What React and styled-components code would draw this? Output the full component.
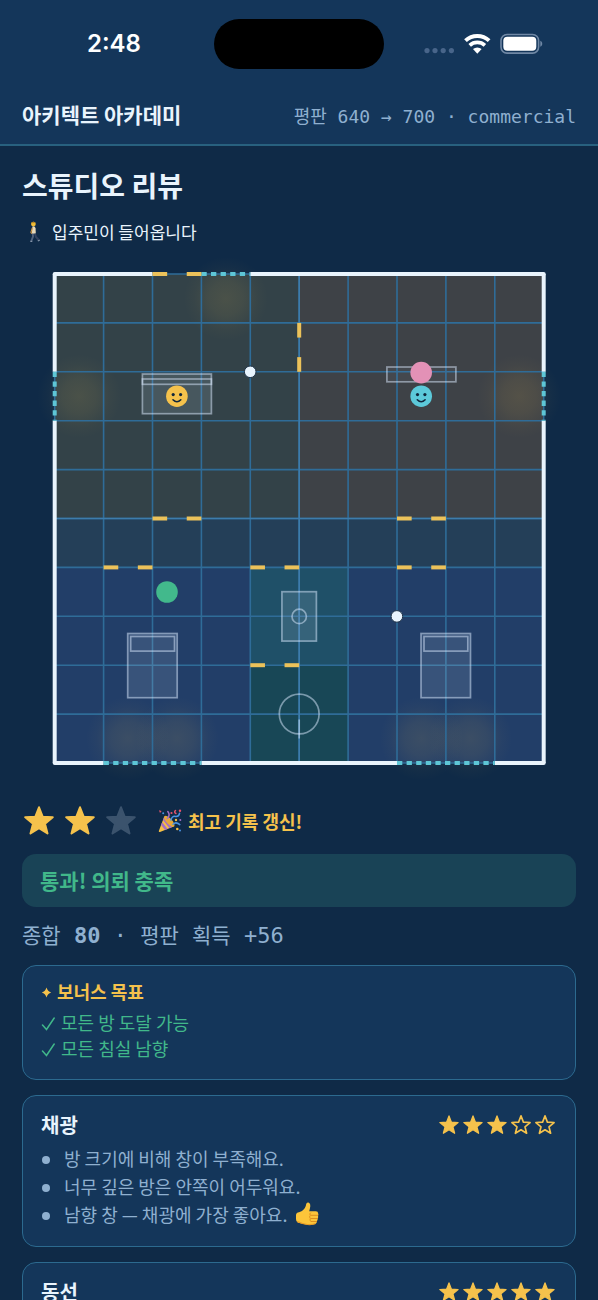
import styled, { createGlobalStyle } from 'styled-components';

const colors = {
  page: '#0f2a47',
  panel: '#14365a',
  line: '#2c6a8f',
  ink: '#e9f4fd',
  muted: '#8fb0d0',
  gold: '#f5c24c',
  green: '#41b88a',
  cyan: '#5ec6d6',
};

const sans = "Inter, 'Noto Sans CJK KR', sans-serif";
const mono = "'DejaVu Sans Mono', 'Noto Sans CJK KR', monospace";

const GlobalStyle = createGlobalStyle`
  * {
    box-sizing: border-box;
  }
  body {
    margin: 0;
    background: ${colors.page};
    color: ${colors.ink};
    font-family: 'Noto Sans CJK KR', sans-serif;
  }
  h1, h2, p, ul {
    margin: 0;
    padding: 0;
  }
`;

const Screen = styled.div`
  display: flex;
  flex-direction: column;
  height: 100vh;
`;

const Header = styled.header`
  flex: none;
  background: ${colors.panel};
  border-bottom: 2px solid #28617f;
`;

const StatusBar = styled.div`
  display: grid;
  grid-template-columns: 1fr 170px 1fr;
  align-items: center;
  justify-items: center;
  height: 88px;
  padding: 0 14px;
`;

const Time = styled.time`
  font-family: ${sans};
  font-weight: 600;
  font-size: 24px;
  line-height: 28px;
  color: #fff;
`;

const Island = styled.div`
  width: 100%;
  height: 50px;
  border-radius: 25px;
  background: #000;
`;

const TitleBar = styled.div`
  display: flex;
  align-items: baseline;
  justify-content: space-between;
  height: 56px;
  padding: 12px 22px 0;
`;

const AppName = styled.p`
  font-weight: 700;
  font-size: 21px;
  line-height: 28px;
`;

const Reputation = styled.p`
  font-family: ${mono};
  font-size: 18px;
  line-height: 28px;
  color: ${colors.muted};
`;

const Main = styled.main`
  flex: 1;
  min-height: 0;
  overflow-y: auto;
  scrollbar-width: none;
  padding: 19px 22px;
`;

const Stack = styled.div`
  display: grid;
  gap: 15px;
`;

const Heading = styled.h1`
  font-weight: 700;
  font-size: 28px;
  line-height: 40px;
`;

const Notice = styled.p`
  display: flex;
  align-items: center;
  gap: 6px;
  font-size: 17px;
  line-height: 23px;
`;

const Plan = styled.svg`
  display: block;
  width: 100%;
  height: auto;
`;

const ResultRow = styled.div`
  display: flex;
  align-items: center;
  gap: 22px;
  height: 36px;
  padding-left: 2px;
`;

const Stars = styled.div`
  display: flex;
  gap: ${props => props.$gap || '0'};
`;

const Record = styled.p`
  display: flex;
  align-items: center;
  gap: 6px;
  font-weight: 700;
  font-size: 18px;
  line-height: 24px;
  color: ${colors.gold};
`;

const Banner = styled.p`
  padding: 12px 18px 13px;
  border-radius: 14px;
  background: #194356;
  font-weight: 700;
  font-size: 21px;
  line-height: 28px;
  color: ${colors.green};
`;

const Score = styled.p`
  font-family: ${mono};
  font-size: 22px;
  line-height: 28px;
  color: ${colors.muted};
`;

const Word = styled.span`
  font-size: 21px;
`;

const Card = styled.section`
  padding: 15px 18px 18px;
  border: 1px solid ${colors.line};
  border-radius: 14px;
  background: ${colors.panel};
`;

const BonusTitle = styled.h2`
  display: flex;
  align-items: center;
  gap: 5px;
  margin-bottom: 8px;
  font-weight: 700;
  font-size: 18px;
  line-height: 20px;
  color: ${colors.gold};
`;

const Goals = styled.ul`
  list-style: none;
`;

const Goal = styled.li`
  display: flex;
  align-items: center;
  gap: 6px;
  font-size: 18px;
  line-height: 26px;
  color: ${colors.green};
`;

const CardHead = styled.div`
  display: flex;
  align-items: center;
  justify-content: space-between;
  margin-bottom: 5px;
`;

const CardTitle = styled.h2`
  font-weight: 700;
  font-size: 20px;
  line-height: 28px;
`;

const Notes = styled.ul`
  list-style: none;
`;

const Note = styled.li`
  display: flex;
  align-items: center;
  padding-left: 1px;
  font-size: 18px;
  line-height: 28px;
  color: ${colors.muted};

  &::before {
    content: '';
    width: 8px;
    height: 8px;
    margin: 4px 14px 0 0;
    border-radius: 50%;
    background: ${colors.muted};
  }

  & > svg {
    margin-left: 8px;
  }
`;

const StatusIcons = () => (
  <svg width="120" height="24" viewBox="0 0 120 24" aria-hidden="true">
    <g fill="#48658a">
      <circle cx="3" cy="18.6" r="2.6" />
      <circle cx="11" cy="18.6" r="2.6" />
      <circle cx="19.2" cy="18.6" r="2.6" />
      <circle cx="27.4" cy="18.6" r="2.6" />
    </g>
    <g fill="none" stroke="#fff">
      <path d="M41.500 8.600a17.400 17.400 0 0 1 23.600 0" strokeWidth="4" />
      <path d="M45.700 13.300a11.200 11.200 0 0 1 15.200 0" strokeWidth="3.700" />
    </g>
    <path d="M53.300 21.800l-4.300-4.700a6.400 6.400 0 0 1 8.600 0z" fill="#fff" />
    <rect x="77" y="2.500" width="37.600" height="18.600" rx="6" fill="none" stroke="#7088a5" strokeWidth="1.600" />
    <rect x="79.300" y="4.800" width="33" height="14" rx="4" fill="#fff" />
    <path d="M116.300 8.800v6c2.600-.8 2.600-5.200 0-6z" fill="#7088a5" />
  </svg>
);

const STAR_PATH =
  'M12 1L14.900 8.500 23 9 16.800 14.200 18.800 22 12 17.700 5.200 22 7.200 14.200 1 9 9.100 8.500z';

const Star = ({ fill = colors.gold }) => (
  <svg width="30" height="30" viewBox="0 0 24 24" aria-hidden="true">
    <path d={STAR_PATH} fill={fill} stroke={fill} strokeWidth="1.600" strokeLinejoin="round" />
  </svg>
);

const RatingStar = ({ outline }) => (
  <svg width="24" height="24" viewBox="-2.500 -2.500 29 29" aria-hidden="true">
    <path
      d={STAR_PATH}
      fill={outline ? 'none' : colors.gold}
      stroke={colors.gold}
      strokeWidth={outline ? 2 : 1.5}
      strokeLinejoin="round"
    />
  </svg>
);

const Rating = ({ value }) => (
  <Stars role="img" aria-label={`${value} / 5`}>
    {[1, 2, 3, 4, 5].map(n => (
      <RatingStar key={n} outline={n > value} />
    ))}
  </Stars>
);

const Walker = () => (
  <svg width="24" height="22" viewBox="0 0 24 22" aria-hidden="true">
    <path d="M10.400 5.500q2.600-.8 3.200 2l.2 5.200-4 .3z" fill="#e9d9b8" />
    <path d="M10.300 7l-1.400 4.300 1 1.500" fill="none" stroke="#d79b45" strokeWidth="1.100" />
    <path d="M10.800 12.500l.2 3.200-1.700 4.300" fill="none" stroke="#51627e" strokeWidth="1.900" />
    <path d="M12.800 12.500l1.200 3.400 2.600 3" fill="none" stroke="#33425f" strokeWidth="2" />
    <path d="M8.300 20.300h2M15.800 20l2-1" stroke="#8494a8" strokeWidth="1.200" />
    <circle cx="11.400" cy="3.100" r="2.400" fill="#f3bd35" />
    <path d="M9.300 2.300q2-2.800 4.300-.2z" fill="#b98724" />
  </svg>
);

const Party = () => (
  <svg width="24" height="24" viewBox="0 0 24 24" aria-hidden="true">
    <path d="M6.400 7.300L.8 22q-.2 1.400 1.200 1l14.300-5.800z" fill="#f6bf45" />
    <path d="M5 11l6.500 8.200 2.600-1.100L6 8.300zM3.100 16l4 5 2.500-1-5.400-6.700z" fill="#a56fc4" />
    <ellipse cx="11.300" cy="12.200" rx="2.800" ry="7" transform="rotate(-44 11.300 12.200)" fill="#e8a838" />
    <g fill="none" strokeWidth="1.500" strokeLinecap="round">
      <path d="M9.200 9.500q3.600-3.200.6-7" stroke="#a56fc4" />
      <path d="M13 11.200q.8-4.500 4.600-3.800 3.600.4 4-3.200" stroke="#4a93e2" />
      <path d="M15 15.200q3-2.800 6.800.4" stroke="#4a93e2" />
      <path d="M17.500 1.500q-1.800 1.700.4 3" stroke="#e5526c" />
    </g>
    <path d="M1 1.200l2.600.8L2 4z" fill="#e5526c" />
    <circle cx="5.200" cy="4.300" r="1" fill="#4a93e2" />
    <circle cx="13.500" cy="4" r="1.100" fill="#e5526c" />
    <circle cx="22" cy="1.800" r="1.200" fill="#e5526c" />
    <circle cx="18" cy="11" r="1.200" fill="#f6bf45" />
    <circle cx="22.300" cy="11" r="1" fill="#a56fc4" />
    <circle cx="19.300" cy="20" r="1.300" fill="#f6bf45" />
    <circle cx="22" cy="21.600" r="1" fill="#4a93e2" />
  </svg>
);

const ThumbUp = () => (
  <svg width="24" height="24" viewBox="0 0 24 24" aria-hidden="true">
    <path
      d="M1 13.200q0-2.600 3-3l3-1.200q3.600-2.600 4.300-7.300Q12 .2 13.400.4q2.800 1 1.500 6l-.7 2.800h6.600q2.400.2 2.300 2 .7 1.400-.1 2.600.6 1.500-.4 2.700.4 1.600-.7 2.600.2 2.500-2.500 3.100-6.400 1.600-11.700-.4L3 20.700Q.9 20 1 17z"
      fill="#fcc53a"
    />
    <path
      d="M22.800 13.300h-6.600M22.500 16.500h-6.300M21.600 19.500h-5.400M15.600 10.800q-1.500 1-.3 2.500-1.400 1.600 0 3.200-1 1.700.6 3"
      fill="none"
      stroke="#d98a1c"
      strokeWidth=".9"
      strokeLinecap="round"
    />
    <path d="M2.200 19.500q5.600 2.600 10.200 3 5.300.4 8.300-1" fill="none" stroke="#e79b25" strokeWidth="1.200" />
  </svg>
);

const Sparkle = () => (
  <svg width="11" height="14" viewBox="0 0 11 14" aria-hidden="true">
    <path
      d="M5.500 3.500Q6.600 7.400 10.200 8.500 6.600 9.600 5.500 13.500 4.400 9.600 .8 8.500 4.400 7.400 5.500 3.500z"
      fill={colors.gold}
    />
  </svg>
);

const Check = () => (
  <svg width="14" height="20" viewBox="0 0 14 20" aria-hidden="true">
    <path d="M1.500 13l4 4.500L13.200 6" fill="none" stroke={colors.green} strokeWidth="1.500" strokeLinecap="round" />
  </svg>
);

// plan geometry: 10 x 10 cells, origin in the top left corner
const CELL = 48.9;
const SIDE = CELL * 10;

const rooms = [
  { x: 0, y: 0, w: 5, h: 5, fill: '#334248' },
  { x: 5, y: 0, w: 5, h: 5, fill: '#3e4247' },
  { x: 0, y: 5, w: 10, h: 1, fill: '#243f58' },
  { x: 0, y: 6, w: 4, h: 4, fill: '#223e68' },
  { x: 4, y: 6, w: 2, h: 2, fill: '#1f5068' },
  { x: 4, y: 8, w: 2, h: 2, fill: '#184756' },
  { x: 6, y: 6, w: 4, h: 4, fill: '#223e68' },
];

const glows = [
  [3.5, 0.5],
  [0.5, 2.5],
  [9.5, 2.5],
  [1.5, 9.5],
  [2.5, 9.5],
  [7.5, 9.5],
  [8.5, 9.5],
];

const doors = [
  { x: 2, y: 0 },
  { x: 5, y: 1, vertical: true },
  { x: 2, y: 5 },
  { x: 7, y: 5 },
  { x: 1, y: 6 },
  { x: 4, y: 6 },
  { x: 7, y: 6 },
  { x: 4, y: 8 },
];

const windows = [
  [3, 0, 4, 0],
  [0, 2, 0, 3],
  [10, 2, 10, 3],
  [1, 10, 3, 10],
  [7, 10, 9, 10],
];

const walls = [
  [0, 0, 2, 0],
  [4, 0, 10, 0],
  [0, 0, 0, 2],
  [0, 3, 0, 10],
  [10, 0, 10, 2],
  [10, 3, 10, 10],
  [0, 10, 1, 10],
  [3, 10, 7, 10],
  [9, 10, 10, 10],
];

const Segment = ({ at, ...rest }) => (
  <line x1={at[0] * CELL} y1={at[1] * CELL} x2={at[2] * CELL} y2={at[3] * CELL} {...rest} />
);

const Door = ({ x, y, vertical }) => {
  const ends = [0, 0.7];
  return ends.map(start => {
    const from = vertical ? [x, y + start] : [x + start, y];
    const to = vertical ? [x, y + start + 0.3] : [x + start + 0.3, y];
    return <Segment key={start} at={[...from, ...to]} stroke="#ecc25a" strokeWidth="4" />;
  });
};

const Bed = ({ x, y }) => (
  <g>
    <rect x={x} y={y} width="49.500" height="64.200" />
    <rect x={x + 3} y={y + 3} width="43.800" height="14.600" fill="none" />
  </g>
);

const Resident = ({ x, y, fill, face }) => (
  <g>
    <circle cx={x} cy={y} r="10.800" fill={fill} />
    {face && (
      <g>
        <circle cx={x - 3.7} cy={y - 1.6} r="1.600" fill="#10263c" />
        <circle cx={x + 3.7} cy={y - 1.6} r="1.600" fill="#10263c" />
        <path
          d={`M${x - 3.9} ${y + 3.6}q3.900 4 7.800 0`}
          fill="none"
          stroke="#10263c"
          strokeWidth="1.600"
          strokeLinecap="round"
        />
      </g>
    )}
  </g>
);

const FloorPlan = () => (
  <Plan viewBox="-32.700 -16 554 530" role="img" aria-label="평면도">
    <defs>
      <radialGradient id="glow">
        <stop offset="0" stopColor="#f5c24c" stopOpacity=".12" />
        <stop offset=".4" stopColor="#f5c24c" stopOpacity=".085" />
        <stop offset=".75" stopColor="#f5c24c" stopOpacity=".025" />
        <stop offset="1" stopColor="#f5c24c" stopOpacity="0" />
      </radialGradient>
    </defs>
    {rooms.map(r => (
      <rect key={`${r.x}-${r.y}`} x={r.x * CELL} y={r.y * CELL} width={r.w * CELL} height={r.h * CELL} fill={r.fill} />
    ))}
    {glows.map(([x, y]) => (
      <circle key={`${x}-${y}`} cx={x * CELL} cy={y * CELL} r="42" fill="url(#glow)" />
    ))}
    <g stroke="#2f6c98" strokeWidth="1.600">
      {[0, 1, 2, 3, 4, 5, 6, 7, 8, 9, 10].map(n => (
        <g key={n}>
          <line x1={n * CELL} y1="0" x2={n * CELL} y2={SIDE} />
          <line x1="0" y1={n * CELL} x2={SIDE} y2={n * CELL} />
        </g>
      ))}
    </g>
    <g stroke="#3d7cac" strokeWidth="1.600">
      <line x1={5 * CELL} y1="0" x2={5 * CELL} y2={SIDE} />
      <line x1="0" y1={5 * CELL} x2={SIDE} y2={5 * CELL} />
    </g>
    <g fill="#dcecff" fillOpacity=".12" stroke="#dcecff" strokeOpacity=".5" strokeWidth="1.700">
      <rect x="87.700" y="100" width="69" height="39.700" />
      <rect x="87.700" y="105" width="69" height="5.300" fill="none" />
      <rect x="332.200" y="93" width="69" height="14.800" fillOpacity=".04" />
      <Bed x={73} y={359.5} />
      <Bed x={366.3} y={359.5} />
      <rect x="227.200" y="317.700" width="34.500" height="49.400" />
      <circle cx="244.500" cy="342.400" r="7.200" fill="none" />
      <circle cx="244.500" cy="440" r="19.900" fill="none" />
      <line x1="244.500" y1="445.500" x2="244.500" y2="464.500" />
    </g>
    <g stroke={colors.ink} strokeWidth="4">
      {walls.map(at => (
        <Segment key={at.join()} at={at} />
      ))}
    </g>
    <g fill={colors.ink}>
      {[0, SIDE].map(x => [0, SIDE].map(y => <circle key={`${x}-${y}`} cx={x} cy={y} r="2" />))}
    </g>
    <g stroke={colors.cyan} strokeWidth="4" strokeDasharray="5.300 4.300">
      {windows.map(at => (
        <Segment key={at.join()} at={at} />
      ))}
    </g>
    {doors.map(door => (
      <Door key={`${door.x}-${door.y}`} {...door} />
    ))}
    <g fill={colors.ink} stroke="#1f3348" strokeWidth="1">
      <circle cx="195.500" cy="97.800" r="5.800" />
      <circle cx="342.200" cy="342.400" r="5.800" />
    </g>
    <Resident x={122.2} y={122.2} fill={colors.gold} face />
    <Resident x={366.5} y={98.6} fill="#e391b6" />
    <Resident x={366.5} y={122.2} fill="#5cc9da" face />
    <Resident x={112.3} y={318} fill="#42b98c" />
  </Plan>
);

const App = () => (
  <Screen>
    <GlobalStyle />
    <Header>
      <StatusBar>
        <Time>2:48</Time>
        <Island />
        <StatusIcons />
      </StatusBar>
      <TitleBar>
        <AppName>아키텍트 아카데미</AppName>
        <Reputation>평판 640 → 700 · commercial</Reputation>
      </TitleBar>
    </Header>
    <Main>
      <Stack>
        <Heading>스튜디오 리뷰</Heading>
        <Notice>
          <Walker />
          입주민이 들어옵니다
        </Notice>
        <FloorPlan />
        <ResultRow>
          <Stars $gap="11px" role="img" aria-label="2 / 3">
            <Star />
            <Star />
            <Star fill="#3b536d" />
          </Stars>
          <Record>
            <Party />
            최고 기록 갱신!
          </Record>
        </ResultRow>
        <Banner>통과! 의뢰 충족</Banner>
        <Score>
          <Word>종합</Word> <b>80</b> · <Word>평판</Word> <Word>획득</Word> +56
        </Score>
        <Card>
          <BonusTitle>
            <Sparkle />
            보너스 목표
          </BonusTitle>
          <Goals>
            <Goal>
              <Check />
              모든 방 도달 가능
            </Goal>
            <Goal>
              <Check />
              모든 침실 남향
            </Goal>
          </Goals>
        </Card>
        <Card>
          <CardHead>
            <CardTitle>채광</CardTitle>
            <Rating value={3} />
          </CardHead>
          <Notes>
            <Note>방 크기에 비해 창이 부족해요.</Note>
            <Note>너무 깊은 방은 안쪽이 어두워요.</Note>
            <Note>
              남향 창 — 채광에 가장 좋아요.
              <ThumbUp />
            </Note>
          </Notes>
        </Card>
        <Card>
          <CardHead>
            <CardTitle>동선</CardTitle>
            <Rating value={5} />
          </CardHead>
        </Card>
      </Stack>
    </Main>
  </Screen>
);

export default App;
